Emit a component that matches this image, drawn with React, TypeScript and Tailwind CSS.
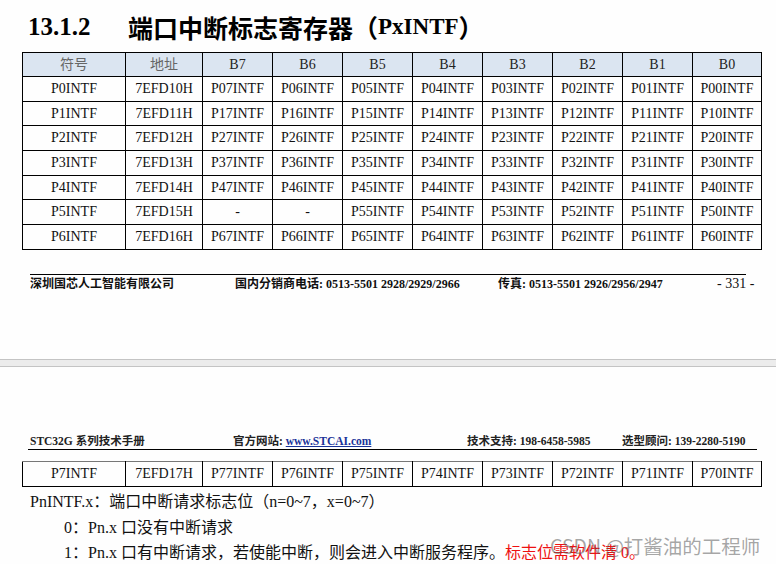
const serif = "font-['Liberation_Serif','Noto_Sans_CJK_SC',serif]";

const cols = [103, 77, 70, 70, 70, 70, 70, 70, 70, 69];
const heads = ["符号", "地址", "B7", "B6", "B5", "B4", "B3", "B2", "B1", "B0"];

const rows = [0, 1, 2, 3, 4, 5, 6].map((n) => {
  const bits = [7, 6, 5, 4, 3, 2, 1, 0].map((b) =>
    n === 5 && (b === 7 || b === 6) ? "-" : `P${n}${b}INTF`
  );
  return [`P${n}INTF`, `7EFD1${n}H`, ...bits];
});

const p7 = ["P7INTF", "7EFD17H", ...[7, 6, 5, 4, 3, 2, 1, 0].map((b) => `P7${b}INTF`)];

const Cols = () => (
  <colgroup>
    {cols.map((w, i) => (
      <col key={i} style={{ width: w }} />
    ))}
  </colgroup>
);

export default function App() {
  return (
    <div className={`relative w-[776px] h-[564px] overflow-hidden bg-[#fefefe] text-[#111] ${serif}`}>
      {/* page 1 */}
      <div className="h-[359px]">
        <div className="pt-[12px] pl-[28px] h-[41px] flex items-center font-bold text-black leading-[28px]">
          <span className="text-[25px] w-[100px]">13.1.2</span>
          <span className="text-[25px] font-['Noto_Sans_CJK_SC',sans-serif]">端口中断标志寄存器（</span>
          <span className="text-[23px]">PxINTF</span>
          <span className="text-[25px] font-['Noto_Sans_CJK_SC',sans-serif]">）</span>
        </div>

        <table className="ml-[22px] mt-[11px] w-[740px] table-fixed border-collapse text-[14px] text-center">
          <Cols />
          <thead>
            <tr className="h-[24px] bg-[#dbe5f1]">
              {heads.map((h, i) => (
                <th key={h} className={`border border-black p-0 font-normal ${i < 2 ? "text-[#666]" : "text-[#222]"}`}>
                  {h}
                </th>
              ))}
            </tr>
          </thead>
          <tbody>
            {rows.map((r, i) => (
              <tr key={i} className="h-[24.7px]">
                {r.map((c, j) => (
                  <td key={j} className="border border-black p-0 leading-none">
                    {c}
                  </td>
                ))}
              </tr>
            ))}
          </tbody>
        </table>

        <div className="ml-[30px] mt-[24px] w-[716px] border-t border-black" />
        <div className="pl-[30px] pt-[2px] flex items-center h-[16px] text-[12px] font-bold text-[#111] leading-[14px]">
          <span className="w-[205px]">深圳国芯人工智能有限公司</span>
          <span className="w-[263px]">国内分销商电话: 0513-5501 2928/2929/2966</span>
          <span className="w-[219px]">传真: 0513-5501 2926/2956/2947</span>
          <span className="text-[14px] font-normal">- 331 -</span>
        </div>
      </div>

      {/* page gap */}
      <div className="h-[8px] border-y border-[#c4c4c4] bg-[#ececec]" />

      {/* page 2 */}
      <div>
        <div className="ml-[28px] mt-[67px] w-[729px] h-[16px] border-b border-black pl-[2px] flex items-start text-[11.5px] font-bold text-[#222] leading-[14px]">
          <span className="w-[203px]">STC32G 系列技术手册</span>
          <span className="w-[234px]">
            官方网站: <span className="text-[#1a3399] underline">www.STCAI.com</span>
          </span>
          <span className="w-[155px]">技术支持: 198-6458-5985</span>
          <span>选型顾问: 139-2280-5190</span>
        </div>

        <table className="ml-[22px] mt-[11px] w-[740px] table-fixed border-collapse text-[14px] text-center">
          <Cols />
          <tbody>
            <tr className="h-[25px]">
              {p7.map((c, j) => (
                <td key={j} className="border border-black border-t-[#777] p-0 leading-none">
                  {c}
                </td>
              ))}
            </tr>
          </tbody>
        </table>

        <div className="mt-[2px] text-[16px] leading-[25.5px] text-[#111]">
          <p className="pl-[30px]">PnINTF.x：端口中断请求标志位（n=0~7，x=0~7）</p>
          <p className="pl-[64px]">0：Pn.x 口没有中断请求</p>
          <p className="pl-[64px]">
            1：Pn.x 口有中断请求，若使能中断，则会进入中断服务程序。
            <span className="text-[#ee1111]">标志位需软件清 0。</span>
          </p>
        </div>
      </div>

      <div className="absolute left-[550px] top-[534px] text-[19.5px] leading-[24px] text-[rgba(90,90,90,0.55)] font-['Noto_Sans_CJK_SC',sans-serif] whitespace-nowrap">
        CSDN @打酱油的工程师
      </div>
    </div>
  );
}
